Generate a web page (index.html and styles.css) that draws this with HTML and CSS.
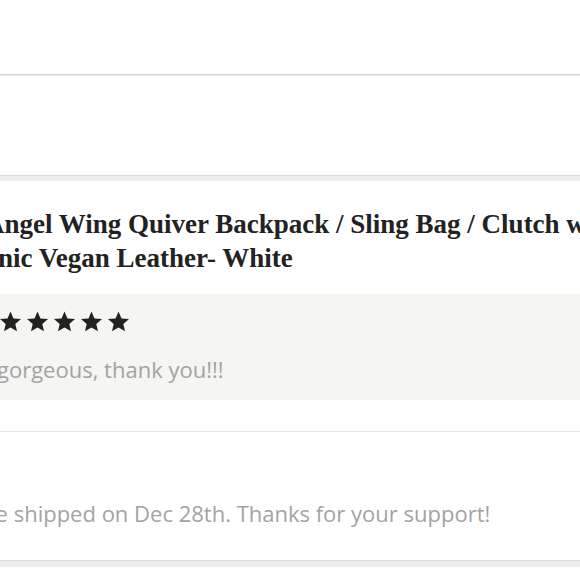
FILE: index.html
```html
<!DOCTYPE html>
<html lang="en">
<head>
    <meta charset="UTF-8">
    <meta name="viewport" content="width=device-width, initial-scale=1.0">
    <title>Reviews</title>
    <link rel="stylesheet" href="styles.css">
</head>
<body>
    <div class="feed">
        <div class="card card-top"></div>
        <div class="card card-blank"></div>
        <div class="card review">
            <h2 class="item-title">Angel Wing Quiver Backpack / Sling Bag / Clutch with Organic Vegan Leather- White</h2>
            <div class="review-box">
                <div class="stars">
                    <svg class="star" viewBox="0 0 24 24"><path d="M12 1.5l3.1 7.3 7.9.6-6 5.2 1.8 7.7L12 18.2l-6.8 4.1L7 14.6 1 9.4l7.9-.6z"/></svg>
                    <svg class="star" viewBox="0 0 24 24"><path d="M12 1.5l3.1 7.3 7.9.6-6 5.2 1.8 7.7L12 18.2l-6.8 4.1L7 14.6 1 9.4l7.9-.6z"/></svg>
                    <svg class="star" viewBox="0 0 24 24"><path d="M12 1.5l3.1 7.3 7.9.6-6 5.2 1.8 7.7L12 18.2l-6.8 4.1L7 14.6 1 9.4l7.9-.6z"/></svg>
                    <svg class="star" viewBox="0 0 24 24"><path d="M12 1.5l3.1 7.3 7.9.6-6 5.2 1.8 7.7L12 18.2l-6.8 4.1L7 14.6 1 9.4l7.9-.6z"/></svg>
                    <svg class="star" viewBox="0 0 24 24"><path d="M12 1.5l3.1 7.3 7.9.6-6 5.2 1.8 7.7L12 18.2l-6.8 4.1L7 14.6 1 9.4l7.9-.6z"/></svg>
                </div>
                <p class="review-text">gorgeous, thank you!!!</p>
            </div>
            <div class="reply">
                <p class="reply-text">It will be shipped on Dec 28th. Thanks for your support!</p>
            </div>
        </div>
        <div class="card card-next"></div>
    </div>
</body>
</html>
```

FILE: styles.css
```css
body {
    margin: 0;
    background-color: #ececec;
    font-family: "Open Sans", "Liberation Sans", sans-serif;
    overflow: hidden;
}
.feed {
    margin-left: -62px;
    width: 720px;
}
.card {
    background-color: white;
}
.card-top {
    height: 74px;
    border-bottom: 1px solid #d4d4d4;
    margin-bottom: 1px;
}
.card-blank {
    height: 99px;
    border-bottom: 1px solid #dcdcdc;
    margin-bottom: 5px;
}
.review {
    padding: 26px 0 33px 0;
    border-bottom: 1px solid #dcdcdc;
    margin-bottom: 6px;
}
.item-title {
    margin: 0;
    font-family: "Liberation Serif", serif;
    font-size: 27px;
    line-height: 34px;
    font-weight: bold;
    color: #222;
    text-indent: 47px;
}
.review-box {
    margin-top: 19px;
    padding: 16px 0 17px 61px;
    background-color: #f5f5f1;
}
.stars {
    display: flex;
    gap: 4px;
    height: 23px;
}
.star {
    width: 23px;
    height: 23px;
    fill: #222;
}
.review-text {
    margin: 23px 0 0 -2px;
    font-size: 22px;
    line-height: 27px;
    color: #a3a3a3;
}
.reply {
    margin-top: 31px;
    border-top: 1px solid #e6e6e6;
    padding-top: 68px;
}
.reply-text {
    margin: 0 0 0 -15px;
    font-size: 22px;
    line-height: 27px;
    color: #a3a3a3;
}
.card-next {
    height: 40px;
}
```
